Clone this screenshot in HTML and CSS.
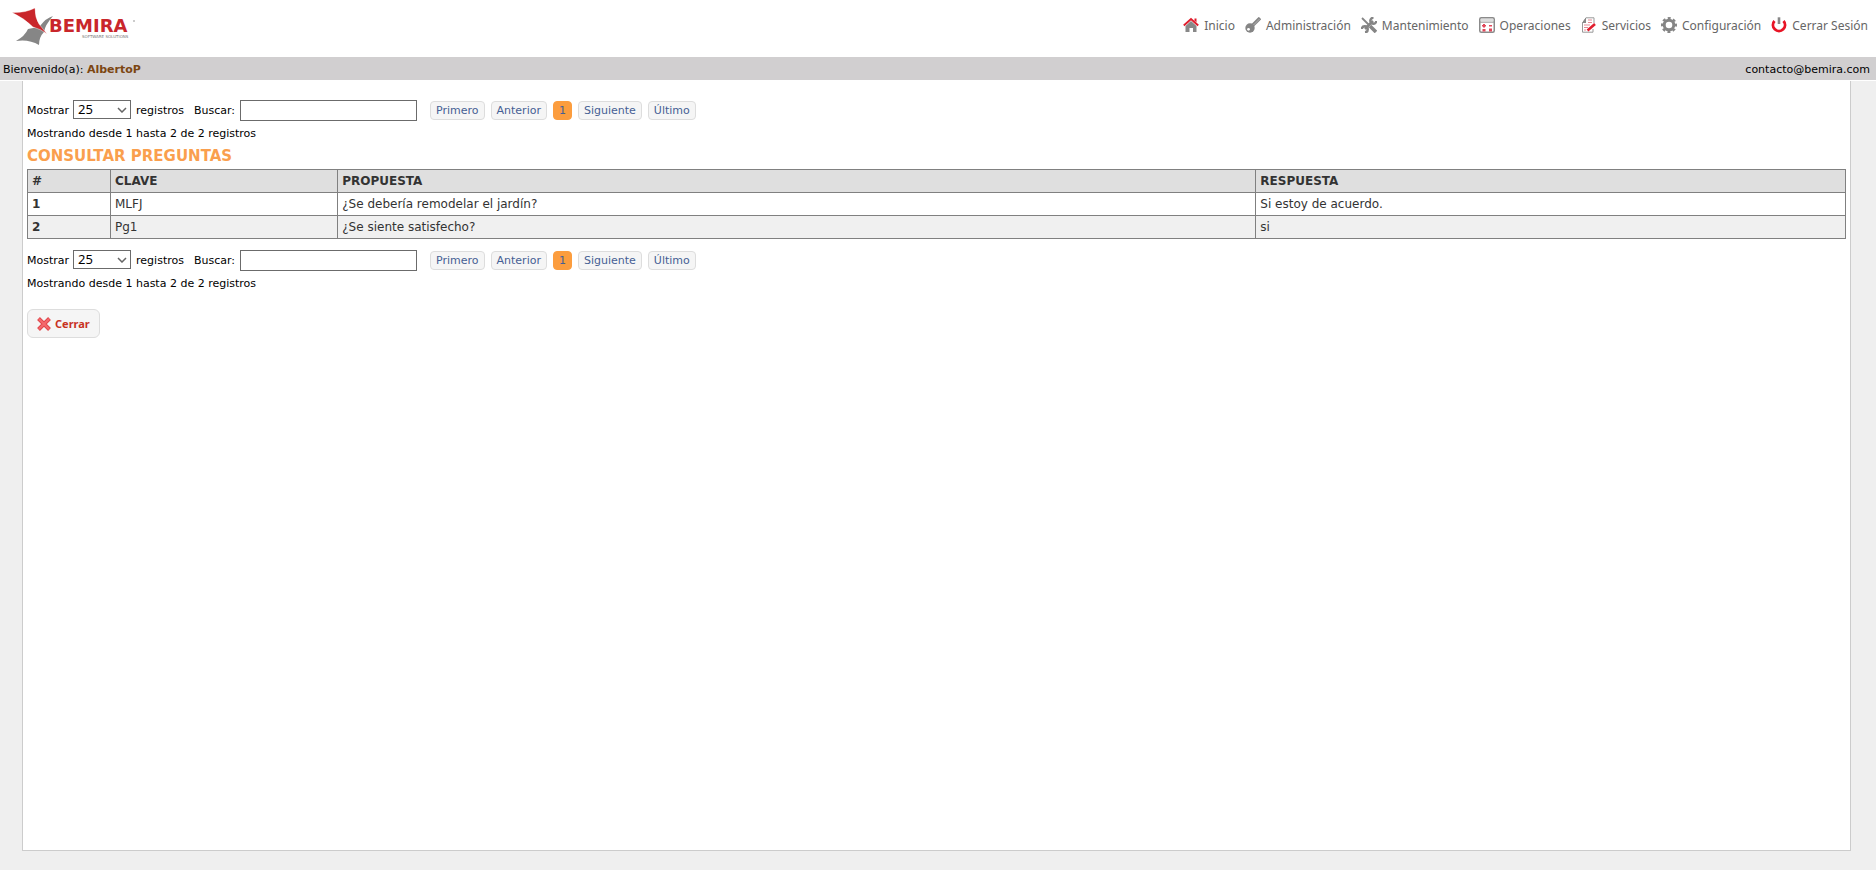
FILE: index.html
```html
<!DOCTYPE html>
<html lang="es">
<head>
  <meta charset="UTF-8">
  <meta name="viewport" content="width=device-width, initial-scale=1.0">
  <title>Consultar preguntas</title>
  <link rel="stylesheet" href="styles.css">
</head>
<body>
  <header class="header">
    <a class="logo" href="#" aria-label="Bemira">
      <svg width="128" height="42" viewBox="0 0 128 42">
        <path fill="#868686" d="M42 8 Q34 17 33 24 Q28 29 28 37 Q18 31 5 33 Q14 28 17 21 Q24 20 29 18 Q35 10 42 8Z"/>
        <path fill="#c9262b" stroke="#fff" stroke-width=".4" d="M1 4.500 Q14 5 24 0 Q24 10 28 16 L36 26 Q30 21 22 19 Q13 10 1 4.500Z"/>
        <text class="logo-name" x="38" y="24">BEMIRA</text>
        <text class="logo-sub" x="71" y="30">SOFTWARE SOLUTIONS</text>
        <circle cx="123" cy="13" r="1" fill="#bbb"/>
      </svg>
    </a>
    <nav class="menu">
      <a href="#">
        <svg width="16" height="16" viewBox="0 0 16 16"><path fill="#888" d="M2.500 9 L8 4 L13.500 9 V15 H10 V11 H6.500 V15 H2.500Z"/><path fill="none" stroke="#e01e2e" stroke-width="2" d="M.8 8.500 L8 2 L15.200 8.500"/><path fill="#e01e2e" d="M11.500 1.500h2v4l-2-2z"/></svg>
        Inicio
      </a>
      <a href="#">
        <svg width="16" height="16" viewBox="0 0 16 16"><circle cx="5" cy="11" r="4.700" fill="#858585"/><path stroke="#858585" stroke-width="3.400" d="M6 10 L15 1"/><path stroke="#bbb" stroke-width=".8" d="M8.500 8 L14.500 2"/><circle cx="3.500" cy="12.300" r="1.400" fill="#fff"/></svg>
        Administración
      </a>
      <a href="#">
        <svg width="16" height="16" viewBox="0 0 16 16"><g fill="none" stroke="#858585"><path stroke-width="1.800" d="M1 1 L8 8"/><path stroke-width="3.600" d="M9 9 L15 15"/><path stroke-width="2.600" d="M4 12 L12 4"/><path stroke-width="2.400" d="M12.500 .8 A3 3 0 1 0 15.300 4 M.8 12 A3 3 0 1 1 4 15.300"/></g></svg>
        Mantenimiento
      </a>
      <a href="#">
        <svg width="16" height="16" viewBox="0 0 16 16"><rect x=".75" y=".75" width="14.500" height="14.500" rx="1.500" fill="#fff" stroke="#8b8b8b" stroke-width="1.500"/><path fill="#999" d="M1 4.500h14v1.200H1z"/><path fill="#ddd" d="M2 2h12v2.500H2z"/><path fill="#e0485a" d="M4 7h2v1h1v1.500H6v1H4v-1H3V8h1zM10 8h3v1.500h-3zM3.500 12h3v2.500h-3zM10 11.500h3v3h-3z"/></svg>
        Operaciones
      </a>
      <a href="#">
        <svg width="16" height="16" viewBox="0 0 16 16"><path fill="#fff" stroke="#999" d="M5 .8 H13 V6 M12 12 V15.200 H1.500 V6 L5 .8"/><path fill="#888" d="M1 6 L5 .5 V6Z"/><path stroke="#e58a94" d="M7 3h4M7 5.500h4M3 8h6M3 10.500h4M3 13h2"/><path stroke="#e01e2e" stroke-width="2.600" d="M6.500 13.500 L14 7"/></svg>
        Servicios
      </a>
      <a href="#">
        <svg width="16" height="16" viewBox="0 0 16 16"><circle cx="8" cy="8" r="4.800" fill="none" stroke="#858585" stroke-width="3"/><circle cx="8" cy="8" r="6.900" fill="none" stroke="#858585" stroke-width="2.200" stroke-dasharray="3 2.419" stroke-dashoffset="1.500"/></svg>
        Configuración
      </a>
      <a href="#">
        <svg width="16" height="16" viewBox="0 0 16 16"><path fill="none" stroke="#e81425" stroke-width="2.900" d="M3.500 4 A6 6 0 1 0 12.500 4"/><path stroke="#888" stroke-width="2.600" d="M8 .3 V7"/></svg>
        Cerrar Sesión
      </a>
    </nav>
  </header>

  <div class="user-bar">
    <span>Bienvenido(a): <b>AlbertoP</b></span>
    <span>contacto@bemira.com</span>
  </div>

  <main class="content">
    <div class="table-tools">
      <label for="length1">Mostrar</label>
      <select id="length1" class="length">
        <option>10</option>
        <option selected>25</option>
        <option>50</option>
      </select>
      <span>registros</span>
      <label class="search-label" for="search1">Buscar:</label>
      <input class="search" type="text" id="search1">
      <div class="pages">
        <button type="button">Primero</button>
        <button type="button">Anterior</button>
        <button type="button" class="active">1</button>
        <button type="button">Siguiente</button>
        <button type="button">Último</button>
      </div>
    </div>
    <p class="info">Mostrando desde 1 hasta 2 de 2 registros</p>

    <h1>CONSULTAR PREGUNTAS</h1>
    <table class="grid">
      <colgroup>
        <col class="col-num">
        <col class="col-key">
        <col class="col-question">
        <col>
      </colgroup>
      <thead>
        <tr><th>#</th><th>CLAVE</th><th>PROPUESTA</th><th>RESPUESTA</th></tr>
      </thead>
      <tbody>
        <tr><th>1</th><td>MLFJ</td><td>¿Se debería remodelar el jardín?</td><td>Si estoy de acuerdo.</td></tr>
        <tr><th>2</th><td>Pg1</td><td>¿Se siente satisfecho?</td><td>si</td></tr>
      </tbody>
    </table>

    <div class="table-tools">
      <label for="length2">Mostrar</label>
      <select id="length2" class="length">
        <option>10</option>
        <option selected>25</option>
        <option>50</option>
      </select>
      <span>registros</span>
      <label class="search-label" for="search2">Buscar:</label>
      <input class="search" type="text" id="search2">
      <div class="pages">
        <button type="button">Primero</button>
        <button type="button">Anterior</button>
        <button type="button" class="active">1</button>
        <button type="button">Siguiente</button>
        <button type="button">Último</button>
      </div>
    </div>
    <p class="info">Mostrando desde 1 hasta 2 de 2 registros</p>

    <button type="button" class="close">
      <svg width="14" height="14" viewBox="0 0 14 14"><path stroke="#e0474c" stroke-width="4" d="M1.500 1.500 L12.500 12.500 M12.500 1.500 L1.500 12.500"/><path stroke="#f5696c" stroke-width="2" d="M2 2 L12 12 M12 2 L2 12"/></svg>
      Cerrar
    </button>
  </main>
</body>
</html>
```

FILE: styles.css
```css
* {
  box-sizing: border-box;
}

body {
  margin: 0;
  min-height: 100vh;
  display: flex;
  flex-direction: column;
  background: #efefef;
  color: #000;
  font-family: Verdana, "DejaVu Sans", sans-serif;
  font-size: 11px;
}

.header {
  display: flex;
  justify-content: space-between;
  align-items: flex-start;
  height: 57px;
  padding: 8px 8px 0 11px;
  background: #fff;
}

.logo svg {
  display: block;
}

.logo-name {
  font-family: "DejaVu Sans", sans-serif;
  font-size: 18px;
  font-weight: bold;
  fill: #c9262b;
}

.logo-sub {
  font-family: "DejaVu Sans", sans-serif;
  font-size: 4px;
  fill: #777;
}

.menu {
  display: flex;
  gap: 10px;
  padding-top: 9px;
}

.menu a {
  display: flex;
  align-items: center;
  gap: 5px;
  height: 16px;
  color: #666;
  font-family: Tahoma, "Noto Sans", sans-serif;
  font-size: 12px;
  text-decoration: none;
}

.user-bar {
  display: flex;
  justify-content: space-between;
  align-items: center;
  height: 24px;
  padding: 1px 6px 0 3px;
  background: #d1cfd0;
  border-bottom: 1px solid #fff;
}

.user-bar b {
  color: #7c4612;
}

.content {
  flex: 1;
  margin: 0 25px 19px 22px;
  padding: 19px 4px;
  background: #fff;
  border: 1px solid #ccc;
  border-top: 0;
}

.table-tools {
  display: flex;
  align-items: center;
  height: 21px;
}

.length {
  appearance: none;
  width: 58px;
  height: 19px;
  margin: 0 5px 2px 4px;
  padding: 0 4px;
  border: 1px solid #6b6b6b;
  border-radius: 0;
  background: #fff url("data:image/svg+xml,%3Csvg xmlns='http://www.w3.org/2000/svg' width='10' height='6'%3E%3Cpath d='M1 1l4 4 4-4' fill='none' stroke='%23666' stroke-width='1.500'/%3E%3C/svg%3E") no-repeat right 3px center;
  color: #000;
  font-family: "Noto Sans", sans-serif;
  font-size: 13px;
  line-height: 17px;
}

.search-label {
  margin-left: 10px;
}

.search {
  width: 177px;
  height: 21px;
  margin-left: 5px;
  border: 1px solid #6b6b6b;
}

.pages {
  display: flex;
  gap: 6px;
  margin-left: 13px;
}

.pages button {
  height: 19px;
  padding: 0 5px;
  border: 1px solid #ddd;
  border-radius: 4px;
  background: #f5f5f5;
  color: #465f94;
  font-family: inherit;
  font-size: 11px;
}

.pages .active {
  border-color: #fc9d3e;
  background: #fc9d3e;
}

.info {
  margin: 6px 0 0;
  line-height: 14px;
}

h1 {
  margin: 6px 0 3px;
  color: #fa9f4e;
  font-size: 15px;
  line-height: 19px;
}

.grid {
  width: 100%;
  margin-bottom: 11px;
  border-collapse: collapse;
  table-layout: fixed;
  color: #333;
  font-size: 12px;
  line-height: 16px;
}

.grid th,
.grid td {
  height: 23px;
  padding: 3px 4px;
  border: 1px solid #808080;
  text-align: left;
}

.grid thead {
  background: #dfdfdf;
}

.grid tbody tr:nth-child(even) {
  background: #f0f0f0;
}

.col-num {
  width: 83px;
}

.col-key {
  width: 12.5%;
}

.col-question {
  width: 50.5%;
}

.close {
  display: flex;
  align-items: center;
  gap: 4px;
  height: 29px;
  margin-top: 18px;
  padding: 0 9px;
  border: 1px solid #ddd;
  border-radius: 6px;
  background: #f5f5f5;
  color: #c8321f;
  font-family: "Noto Sans", sans-serif;
  font-size: 11px;
  font-weight: bold;
}
```
